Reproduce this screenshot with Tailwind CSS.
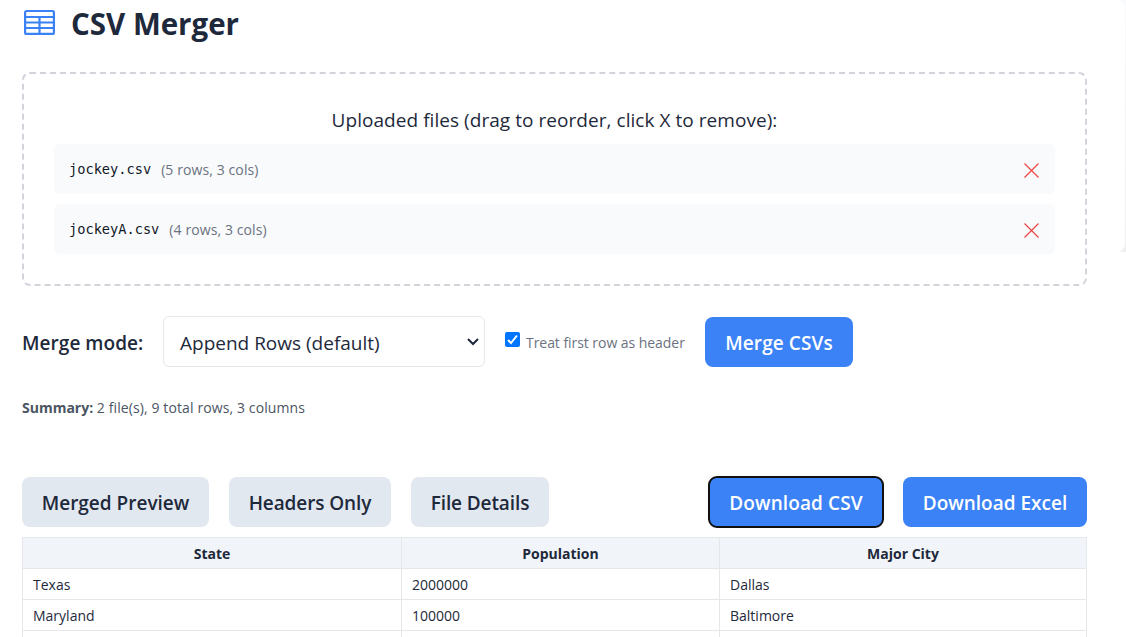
<!DOCTYPE html>
<html lang="en">
<head>
<meta charset="utf-8">
<title>CSV Merger</title>
<script src="https://cdn.jsdelivr.net/npm/@tailwindcss/browser@4"></script>
</head>
<body class="relative h-[637px] overflow-hidden bg-white font-['Open_Sans',sans-serif] text-[19px] text-[#1e293b]">
<div class="pointer-events-none absolute top-0 right-0 h-[252px] w-10 overflow-hidden bg-linear-to-b from-[#f8fafc] to-[#eeeff1]"><div class="mr-[1px] h-full rounded-r-lg bg-white"></div></div>
<main class="relative ml-[22px] flex w-[1065px] flex-col">
  <header class="flex h-[72px] items-start">
    <svg class="mt-[9px] ml-[2px] h-[26px] w-[31px]" viewBox="0 0 31 26" fill="none" stroke="#3b82f6" stroke-width="2.2"><rect x="1.1" y="2" width="28.8" height="22.9" rx="1.5"/><path d="M1 8H30M1 13.5H30M1 19H30M15.5 8V25"/></svg>
    <h1 class="ml-4 text-[29.5px] leading-[47px] font-bold whitespace-nowrap"><span>CSV Merger</span></h1>
  </header>
  <section class="flex h-[214px] flex-col rounded-lg border-2 border-dashed border-[#d1d5db] px-[30px] pt-[30px]">
    <p class="h-10 text-center leading-[32px] tracking-[0.05px]"><span>Uploaded files (drag to reorder, click X to remove):</span></p>
    <ul class="flex flex-col gap-[10px]">
      <li class="flex h-[50px] items-center rounded-md bg-[#f9fafc] pr-4 pl-[15px]"><span class="mt-px font-['DejaVu_Sans_Mono',monospace] text-[13.65px] text-[#111827]">jockey.csv</span><span class="ml-[10px] text-[14px] tracking-[0.1px] text-[#6b7280]">(5 rows, 3 cols)</span>
        <svg class="mt-[2px] ml-auto size-[15px]" viewBox="0 0 15 15" stroke="#ef4444" stroke-width="1.2"><path d="M.5.5l14 14M14.5.5l-14 14"/></svg></li>
      <li class="flex h-[50px] items-center rounded-md bg-[#f9fafc] pr-4 pl-[15px]"><span class="mt-px font-['DejaVu_Sans_Mono',monospace] text-[13.65px] text-[#111827]">jockeyA.csv</span><span class="ml-[10px] text-[14px] tracking-[0.1px] text-[#6b7280]">(4 rows, 3 cols)</span>
        <svg class="mt-[2px] ml-auto size-[15px]" viewBox="0 0 15 15" stroke="#ef4444" stroke-width="1.2"><path d="M.5.5l14 14M14.5.5l-14 14"/></svg></li>
    </ul>
  </section>
  <section class="mt-[30px] flex h-[51px] items-center whitespace-nowrap">
    <span class="w-[141px] pt-[3px] font-semibold tracking-[0.05px]">Merge mode:</span>
    <div class="flex h-[51px] w-[322px] items-center justify-between rounded-md border border-[#e5e7eb] pr-[5px] pl-4"><span class="pt-[3px]">Append Rows (default)</span><svg class="h-[8px] w-[12px]" viewBox="0 0 12 8" fill="none" stroke="#1e293b" stroke-width="2"><path d="M1 1l5 5 5-5"/></svg></div>
    <label class="ml-5 flex w-[200px] items-center gap-[6px] pt-[2px] text-[14px] tracking-[-0.05px] text-[#6b7280]"><svg class="-mt-[7px] size-[15px]" viewBox="0 0 15 15"><rect width="15" height="15" rx="2" fill="#0075ff"/><path d="M3 8l3 3 6-7.5" fill="none" stroke="#fff" stroke-width="2"/></svg><span>Treat first row as header</span></label>
    <button class="mt-px h-[50px] w-[148px] rounded-lg bg-[#3b82f6] pt-[2px] font-semibold tracking-[0.1px] text-white">Merge CSVs</button>
  </section>
  <p class="mt-[30px] h-[80px] text-[14px] leading-[22px] whitespace-nowrap text-[#4b5563]"><b>Summary:</b> <span class="tracking-[0.11px]">2 file(s), 9 total rows, 3 columns</span></p>
  <nav class="flex h-[50px] gap-5 font-semibold whitespace-nowrap">
    <button class="w-[187px] rounded-lg bg-[#e2e8f0] pt-[2px]">Merged Preview</button>
    <button class="w-[162px] rounded-lg bg-[#e2e8f0] pt-[2px] tracking-[-0.1px]">Headers Only</button>
    <button class="w-[138px] rounded-lg bg-[#e2e8f0] pt-[2px] tracking-[-0.1px]">File Details</button>
    <button class="ml-auto w-[174px] rounded-lg bg-[#3b82f6] pt-[2px] tracking-[0.1px] text-white outline-2 -outline-offset-1 outline-[#101010]">Download CSV</button>
    <button class="w-[184px] rounded-lg bg-[#3b82f6] pt-[2px] text-white">Download Excel</button>
  </nav>
  <table class="mt-[10px] w-[1065px] table-fixed border-collapse text-[14px] leading-[20px] [&_td]:h-[31px] [&_td]:border [&_td]:border-[#e5e7eb] [&_td]:px-[10px] [&_td]:pt-[2px] [&_th]:h-[31px] [&_th]:border [&_th]:border-[#e5e7eb] [&_th]:bg-[#f1f5f9] [&_th]:pt-[2px]">
    <colgroup><col class="w-[379px]"><col class="w-[318px]"><col></colgroup>
    <tr><th>State</th><th>Population</th><th>Major City</th></tr>
    <tr><td>Texas</td><td>2000000</td><td>Dallas</td></tr>
    <tr><td>Maryland</td><td>100000</td><td>Baltimore</td></tr>
    <tr><td></td><td></td><td></td></tr>
  </table>
</main>
</body>
</html>
